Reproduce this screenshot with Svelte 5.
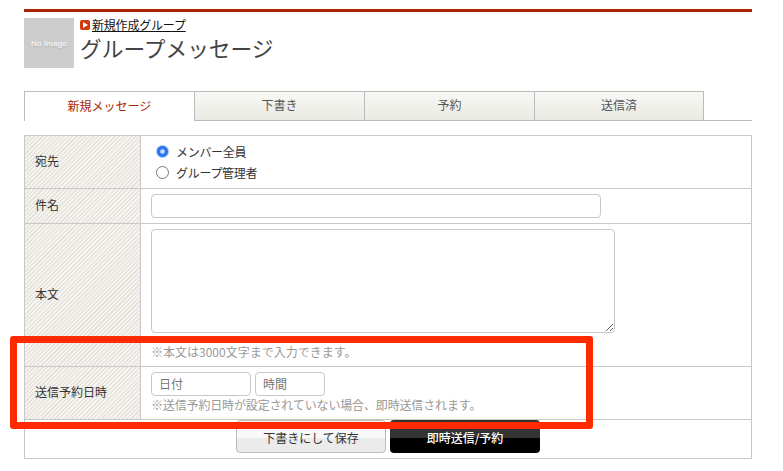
<script>
	const tabs = ['新規メッセージ', '下書き', '予約', '送信済'];
</script>

<div class="page">
	<header class="head">
		<div class="thumb"><span>No Image</span></div>
		<div class="titles">
			<a class="back" href="#top"><span class="play"></span>新規作成グループ</a>
			<h1>グループメッセージ</h1>
		</div>
	</header>

	<nav class="tabs">
		{#each tabs as tab, i}
			<div class="tab" class:active={i === 0}>{tab}</div>
		{/each}
	</nav>

	<form class="form">
		<div class="row row-to">
			<div class="label">宛先</div>
			<div class="field radios">
				<label><input type="radio" name="to" checked />メンバー全員</label>
				<label><input type="radio" name="to" />グループ管理者</label>
			</div>
		</div>
		<div class="row row-subject">
			<div class="label">件名</div>
			<div class="field"><input class="text subject" type="text" /></div>
		</div>
		<div class="row row-body">
			<div class="label">本文</div>
			<div class="field">
				<textarea class="text body"></textarea>
				<p class="note first">※本文は3000文字まで入力できます。</p>
			</div>
		</div>
		<div class="row row-date">
			<div class="label">送信予約日時</div>
			<div class="field">
				<div class="dates">
					<input class="text date" type="text" placeholder="日付" />
					<input class="text time" type="text" placeholder="時間" />
				</div>
				<p class="note tight">※送信予約日時が設定されていない場合、即時送信されます。</p>
			</div>
		</div>
		<div class="actions">
			<button type="button" class="btn draft">下書きにして保存</button>
			<button type="button" class="btn send">即時送信/予約</button>
		</div>
	</form>

	<div class="highlight"></div>
</div>

<style>
	:global(body) {
		margin: 0;
		background: #fff;
	}

	.page {
		position: relative;
		width: 783px;
		height: 471px;
		box-sizing: border-box;
		padding: 9px 31px 0 24px;
		overflow: hidden;
		font-family: 'Noto Sans CJK JP', 'Noto Sans', sans-serif;
		font-size: 12px;
		color: #333;
	}

	.head {
		display: flex;
		gap: 6px;
		height: 73px;
		padding-top: 6px;
		box-sizing: border-box;
		border-top: 3px solid #a92400;
		margin-bottom: 9px;
	}

	.thumb {
		display: flex;
		align-items: center;
		justify-content: center;
		width: 50px;
		height: 50px;
		background: #cdcdcd;
		color: #f2f2f2;
		font-family: 'Liberation Sans', sans-serif;
		font-size: 8px;
		font-weight: bold;
		text-shadow: 0 1px 2px #b0b0b0;
	}

	.titles {
		display: flex;
		flex-direction: column;
		align-items: flex-start;
	}

	.back {
		display: flex;
		align-items: center;
		height: 14px;
		color: #111;
		letter-spacing: -0.2px;
		text-decoration: underline;
		line-height: 14px;
	}

	.play {
		position: relative;
		width: 10px;
		height: 10px;
		margin-right: 2px;
		border-radius: 2px;
		background: #d2380e;
	}

	.play::after {
		content: '';
		position: absolute;
		left: 3px;
		top: 2px;
		border-left: 5px solid #fff;
		border-top: 3px solid transparent;
		border-bottom: 3px solid transparent;
	}

	h1 {
		margin: 0;
		font-size: 21.7px;
		font-weight: 400;
		line-height: 32px;
		color: #444;
	}

	.tabs {
		display: flex;
		height: 29px;
		border-bottom: 1px solid #bbb;
		margin-bottom: 14px;
	}

	.tab {
		display: flex;
		align-items: center;
		justify-content: center;
		width: 170px;
		box-sizing: border-box;
		margin-bottom: -1px;
		height: 30px;
		padding-bottom: 3px;
		border: 1px solid #bbb;
		border-left: 0;
		background: linear-gradient(#f8f8f5, #eaeae3);
		color: #555;
	}

	.tab:last-child {
		width: 169px;
	}

	.tab.active {
		width: 171px;
		border-left: 1px solid #bbb;
		border-bottom: 0;
		background: #fff;
		color: #a92400;
	}

	.form {
		box-sizing: border-box;
		width: 728px;
		height: 324px;
		border: 1px solid #c8c8c8;
	}

	.row {
		display: grid;
		grid-template-columns: 116px 1fr;
		box-sizing: border-box;
		border-bottom: 1px solid #c8c8c8;
	}

	.row-to {
		height: 53px;
	}

	.row-subject {
		height: 35px;
	}

	.row-body {
		height: 143px;
	}

	.row-date {
		height: 53px;
	}

	.label {
		display: flex;
		align-items: center;
		padding: 0 0 4px 10px;
		border-right: 1px solid #c8c8c8;
		background: repeating-linear-gradient(
			135deg,
			#e6e4dc 0,
			#e6e4dc 1.5px,
			#f6f5f2 1.5px,
			#f6f5f2 3px
		);
	}

	.field {
		padding: 5px 10px 0;
		min-width: 0;
	}

	.radios {
		display: flex;
		flex-direction: column;
		gap: 3px;
		padding: 6px 0 0 15px;
	}

	.radios label {
		display: flex;
		align-items: center;
		height: 18px;
		letter-spacing: -0.3px;
	}

	.radios input {
		appearance: none;
		box-sizing: border-box;
		width: 13px;
		height: 13px;
		margin: 0 7px 0 0;
		border: 1px solid #777;
		border-radius: 50%;
		background: #fff;
	}

	.radios input:checked {
		border-color: #9fc0f7;
		background: radial-gradient(circle, #cfe0fd 0, #cfe0fd 1.5px, #2a76f0 3px);
	}

	.text {
		display: block;
		box-sizing: border-box;
		margin: 0;
		padding: 0 7px 2px;
		border: 1px solid #c8c8c8;
		border-radius: 4px;
		background: #fff;
		font: inherit;
		color: #333;
		outline: none;
	}

	.text::placeholder {
		color: #757575;
		opacity: 1;
	}

	.subject {
		width: 450px;
		height: 24px;
	}

	.body {
		width: 464px;
		height: 104px;
	}

	.dates {
		display: flex;
		gap: 4px;
	}

	.date {
		width: 100px;
		height: 24px;
	}

	.time {
		width: 70px;
		height: 24px;
	}

	.note {
		margin: 0;
		font-size: 12px;
		line-height: 17px;
		color: #999;
	}

	.note.first {
		margin-top: 10px;
	}

	.note.tight {
		letter-spacing: -0.15px;
	}

	.actions {
		display: flex;
		justify-content: center;
		gap: 4px;
		height: 33px;
	}

	.btn {
		width: 150px;
		height: 33px;
		border-radius: 4px;
		font: inherit;
		padding: 1px 0 0;
	}

	.draft {
		border: 1px solid #bbb;
		background: linear-gradient(#f8f8f8 55%, #ebebeb 55%);
		color: #333;
	}

	.send {
		border: 0;
		background: linear-gradient(#333 55%, #000 55%);
		color: #fff;
		font-weight: 500;
	}

	.highlight {
		position: absolute;
		left: 10px;
		top: 336px;
		width: 583px;
		height: 93px;
		box-sizing: border-box;
		border: 7px solid #ff2a00;
		border-radius: 3px;
	}
</style>
